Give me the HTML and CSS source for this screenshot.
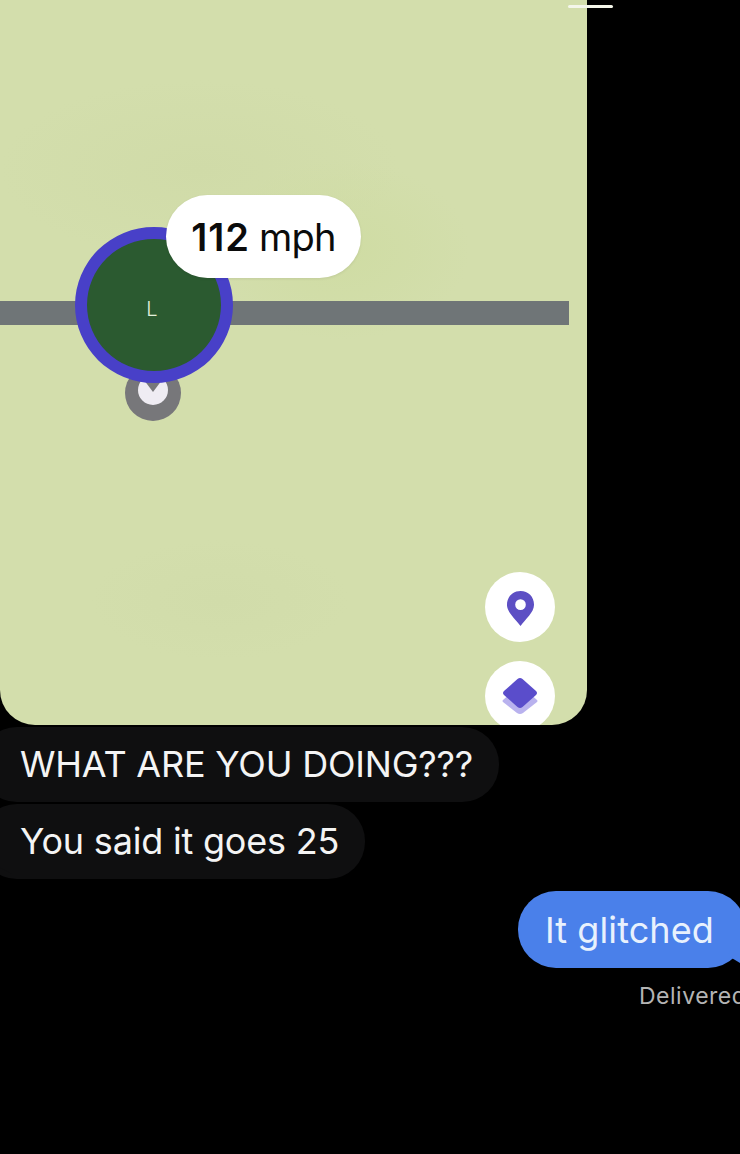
FILE: index.html
```html
<!DOCTYPE html>
<html lang="en">
<head>
  <meta charset="UTF-8" />
  <meta name="viewport" content="width=device-width, initial-scale=1.0"/>
  <title>Messages</title>
  <link rel="stylesheet" href="styles.css">
</head>
<body>

<div class="home-bar"></div>

<div class="map">
  <div class="road"></div>
  <div class="puck-base">
    <svg class="chevron" viewBox="0 0 30 30" width="30" height="30">
      <circle cx="15" cy="15" r="15" fill="#efecf3"/>
      <path d="M6 5 L15 17 L24 5 Z" fill="#77777a"/>
    </svg>
  </div>
  <div class="puck"><span class="puck-letter">L</span></div>
  <div class="speed"><b>112</b> mph</div>

  <button class="map-button pin-button">
    <svg viewBox="0 0 30 38" width="29" height="37">
      <path d="M15 1 C7 1 1 7 1 15 C1 23 10 30 15 37 C20 30 29 23 29 15 C29 7 23 1 15 1 Z" fill="#5d4fc4"/>
      <circle cx="15" cy="15" r="5.5" fill="#fff"/>
    </svg>
  </button>
  <button class="map-button layer-button">
    <svg viewBox="0 0 38 38" width="38" height="38">
      <path d="M19 8 L36 23 Q37 24 36 25 L22 36 Q19 38 16 36 L2 25 Q1 24 2 23 Z" fill="#b9b2ee"/>
      <path d="M16.500 2 Q19 0 21.500 2 L35 14 Q37 16 35 18 L21.500 30 Q19 32 16.500 30 L3 18 Q1 16 3 14 Z" fill="#5a4dcb"/>
    </svg>
  </button>
</div>

<div class="thread">
  <div class="bubble incoming">WHAT ARE YOU DOING???</div>
  <div class="bubble incoming last">You said it goes 25</div>
  <div class="bubble outgoing">It glitched</div>
  <div class="status">Delivered</div>
</div>

</body>
</html>
```

FILE: styles.css
```css
html, body {
  margin: 0;
  padding: 0;
  height: 1154px;
  overflow: hidden;
  background: #000;
  font-family: Inter, "Liberation Sans", sans-serif;
}

.home-bar {
  position: absolute;
  top: 5px;
  left: 568px;
  width: 45px;
  height: 3px;
  background: #f4f6ea;
  border-radius: 2px;
  z-index: 2;
}

.map {
  position: relative;
  width: 587px;
  height: 725px;
  overflow: hidden;
  background-color: #d3deac;
  background-image:
    radial-gradient(ellipse 130px 90px at 340px 250px, #cfdca3, transparent),
    radial-gradient(ellipse 200px 90px at 200px 170px, #d0dba8, transparent),
    radial-gradient(ellipse 130px 60px at 220px 600px, #d1dcaa, transparent);
  border-radius: 0 0 35px 35px;
}

.road {
  position: absolute;
  top: 301px;
  left: 0;
  width: 569px;
  height: 24px;
  background: #6f7577;
}

.puck {
  position: absolute;
  top: 227px;
  left: 75px;
  width: 134px;
  height: 132px;
  border: 12px solid #4840c8;
  border-radius: 50%;
  background: #2b5a30;
  display: flex;
  align-items: center;
  justify-content: center;
}

.puck-letter {
  color: #e4f0dc;
  font-size: 20px;
  font-weight: 300;
  line-height: 1;
  margin: 8px 4px 0 0;
}

.puck-base {
  position: absolute;
  top: 365px;
  left: 125px;
  width: 56px;
  height: 56px;
  border-radius: 50%;
  background: #77777a;
  display: flex;
  justify-content: center;
  padding-top: 10px;
  box-sizing: border-box;
}

.speed {
  position: absolute;
  top: 195px;
  left: 166px;
  width: 195px;
  height: 83px;
  border-radius: 42px;
  background: #fff;
  box-shadow: 0 1px 3px rgba(0, 0, 0, 0.08);
  color: #0b0b0b;
  font-size: 38px;
  letter-spacing: -0.7px;
  display: flex;
  align-items: center;
  justify-content: center;
  gap: 9px;
}

.speed b {
  font-weight: 600;
  letter-spacing: 1px;
}

.map-button {
  position: absolute;
  left: 485px;
  width: 70px;
  height: 70px;
  padding: 0;
  border: none;
  border-radius: 50%;
  background: #fff;
  display: flex;
  align-items: center;
  justify-content: center;
}

.pin-button {
  top: 572px;
  padding-top: 3px;
}

.layer-button {
  top: 661px;
}

.thread {
  display: flex;
  flex-direction: column;
  align-items: flex-start;
  padding-top: 2px;
}

.bubble {
  box-sizing: border-box;
  font-size: 36px;
  line-height: 44px;
  white-space: nowrap;
}

.incoming {
  height: 75px;
  margin-left: -20px;
  margin-bottom: 2px;
  padding: 15px 26px 0 40px;
  border-radius: 37px;
  background: #0f0f10;
  color: #f4f4f4;
  letter-spacing: -0.2px;
}

.last {
  position: relative;
}

.last::after {
  content: "";
  position: absolute;
  left: 20px;
  bottom: 5px;
  width: 12px;
  height: 14px;
  background: #0f0f10;
  clip-path: polygon(0 0, 100% 0, 100% 100%, 0 55%);
}

.outgoing {
  position: relative;
  align-self: flex-end;
  height: 77px;
  margin-top: 10px;
  margin-right: -6px;
  padding: 17px 32px 0 27px;
  border-radius: 38px;
  background: #4a80ea;
  color: #e8f1fd;
  letter-spacing: 0.1px;
}

.outgoing::after {
  content: "";
  position: absolute;
  right: 6px;
  bottom: 5px;
  width: 12px;
  height: 16px;
  background: #4a80ea;
  clip-path: polygon(100% 0, 100% 100%, 0 55%, 30% 0);
}

.status {
  align-self: flex-start;
  margin: 14px 0 0 639px;
  color: #b4b4b4;
  font-size: 23px;
  letter-spacing: 0.5px;
  line-height: 28px;
  white-space: nowrap;
}
```
